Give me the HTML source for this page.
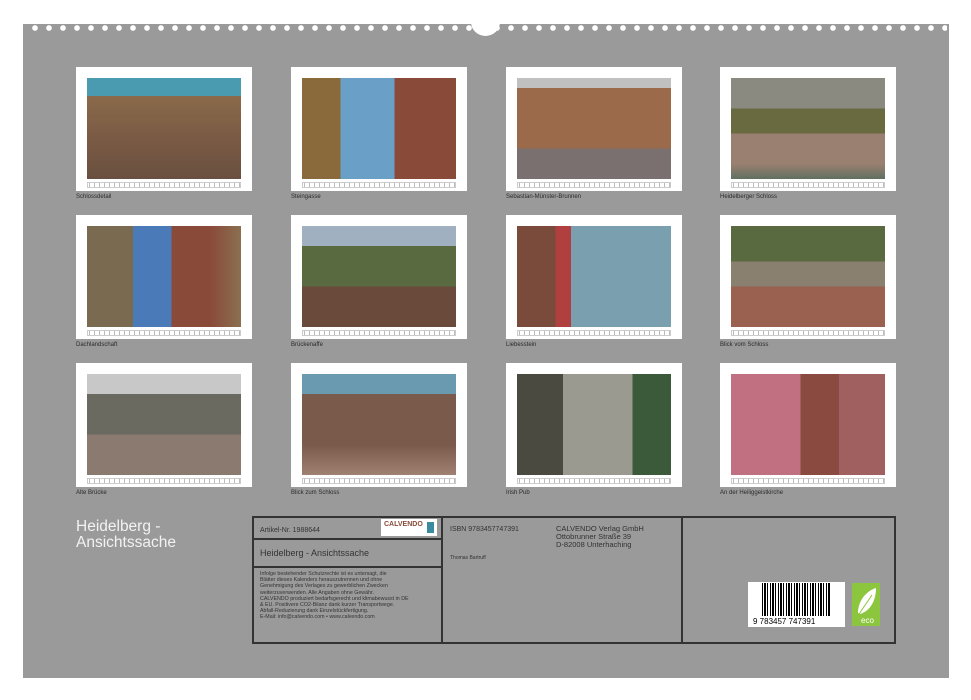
<!DOCTYPE html><html><head><meta charset="utf-8"><style>
body{margin:0;width:971px;height:700px;background:#fff;position:relative;overflow:hidden;font-family:"Liberation Sans",sans-serif}
.pan{position:absolute;left:23px;top:24px;width:926px;height:654px;background:#9a9a9a}
.dots{position:absolute;left:32px;top:25px;width:915px;height:6px;background:radial-gradient(circle at 3px 3px,#fff 2.6px,transparent 3px) 0 0/14px 6px repeat-x}
.notch{position:absolute;left:471px;top:8px;width:29px;height:28px;border-radius:50%;background:#fff}
.c{position:absolute;width:176px;height:124px;background:#fff}
.c .p{position:absolute;left:11px;top:11px;width:154px;height:101px}
.c .s{position:absolute;left:11px;top:115px;width:154px;height:6px;background:repeating-linear-gradient(90deg,#fff 0 1px,#bbb 1px 2px,#fff 2px 5px);border:1px solid #ccc;box-sizing:border-box}
.cap{position:absolute;font-size:6px;color:#2a2a2a}
.b{position:absolute;border:2px solid #333;box-sizing:border-box}
.t{position:absolute;color:#333}
</style></head><body>
<div class="pan"></div><div class="dots"></div><div class="notch"></div>

<div class="c" style="left:76px;top:67px"><div class="p" style="background:linear-gradient(180deg,#4a9ab0 0 18%,#8a6a4a 18%,#7a5a44 60%,#6a5040)"></div><div class="s"></div></div>
<div class="c" style="left:291px;top:67px"><div class="p" style="background:linear-gradient(90deg,#8a6a3a 0 25%,#6aa0c8 25% 60%,#8a4a3a 60%)"></div><div class="s"></div></div>
<div class="c" style="left:506px;top:67px"><div class="p" style="background:linear-gradient(180deg,#c0c0c0 0 10%,#9a6a4a 10% 70%,#7a7070 70%)"></div><div class="s"></div></div>
<div class="c" style="left:720px;top:67px"><div class="p" style="background:linear-gradient(180deg,#8a8a80 0 30%,#6a6a40 30% 55%,#9a8070 55% 85%,#607060)"></div><div class="s"></div></div>

<div class="c" style="left:76px;top:215px"><div class="p" style="background:linear-gradient(90deg,#7a6a50 0 30%,#4a7ab8 30% 55%,#8a4a3a 55% 80%,#8a7050)"></div><div class="s"></div></div>
<div class="c" style="left:291px;top:215px"><div class="p" style="background:linear-gradient(180deg,#a0b0c0 0 20%,#5a6a40 20% 60%,#6a4a3a 60%)"></div><div class="s"></div></div>
<div class="c" style="left:506px;top:215px"><div class="p" style="background:linear-gradient(90deg,#7a4a3a 0 25%,#b04040 25% 35%,#7aa0b0 35% 100%)"></div><div class="s"></div></div>
<div class="c" style="left:720px;top:215px"><div class="p" style="background:linear-gradient(180deg,#5a6a40 0 35%,#8a8070 35% 60%,#9a6050 60%)"></div><div class="s"></div></div>

<div class="c" style="left:76px;top:363px"><div class="p" style="background:linear-gradient(180deg,#c8c8c8 0 20%,#6a6a60 20% 60%,#8a7a70 60%)"></div><div class="s"></div></div>
<div class="c" style="left:291px;top:363px"><div class="p" style="background:linear-gradient(180deg,#6a9ab0 0 20%,#7a5a4a 20% 70%,#a08070)"></div><div class="s"></div></div>
<div class="c" style="left:506px;top:363px"><div class="p" style="background:linear-gradient(90deg,#4a4a40 0 30%,#9a9a90 30% 75%,#3a5a3a 75%)"></div><div class="s"></div></div>
<div class="c" style="left:720px;top:363px"><div class="p" style="background:linear-gradient(90deg,#c07080 0 45%,#8a4a40 45% 70%,#a06060 70%)"></div><div class="s"></div></div>

<div class="cap" style="left:76px;top:194px">Schlossdetail</div>
<div class="cap" style="left:291px;top:194px">Steingasse</div>
<div class="cap" style="left:506px;top:194px">Sebastian-Münster-Brunnen</div>
<div class="cap" style="left:720px;top:194px">Heidelberger Schloss</div>
<div class="cap" style="left:76px;top:342px">Dachlandschaft</div>
<div class="cap" style="left:291px;top:342px">Brückenaffe</div>
<div class="cap" style="left:506px;top:342px">Liebesstein</div>
<div class="cap" style="left:720px;top:342px">Blick vom Schloss</div>
<div class="cap" style="left:76px;top:490px">Alte Brücke</div>
<div class="cap" style="left:291px;top:490px">Blick zum Schloss</div>
<div class="cap" style="left:506px;top:490px">Irish Pub</div>
<div class="cap" style="left:720px;top:490px">An der Heiliggeistkirche</div>

<div class="t" style="left:76px;top:519px;font-size:15.5px;line-height:16px;color:#f2f2f2">Heidelberg -<br>Ansichtssache</div>

<div class="b" style="left:252px;top:516px;width:644px;height:128px"></div>
<div class="b" style="left:441px;top:516px;width:242px;height:128px"></div>
<div class="b" style="left:252px;top:538px;width:191px;height:30px"></div>
<div class="t" style="left:260px;top:527px;font-size:7px">Artikel-Nr. 1988644</div>
<div style="position:absolute;left:381px;top:519px;width:56px;height:17px;background:#fff"><div style="font-size:7px;color:#8a4a3a;margin:2px 0 0 3px;font-weight:bold">CALVENDO</div><div style="position:absolute;right:3px;top:3px;width:7px;height:11px;background:#3a8aa0"></div></div>
<div class="t" style="left:260px;top:548px;font-size:9px">Heidelberg - Ansichtssache</div>
<div class="t" style="left:260px;top:571px;font-size:5.3px;line-height:6.2px">Infolge bestehender Schutzrechte ist es untersagt, die<br>Blätter dieses Kalenders herauszutrennen und ohne<br>Genehmigung des Verlages zu gewerblichen Zwecken<br>weiterzuverwenden. Alle Angaben ohne Gewähr.<br>CALVENDO produziert bedarfsgerecht und klimabewusst in DE<br>&amp; EU. Positivere CO2-Bilanz dank kurzer Transportwege.<br>Abfall-Reduzierung dank Einzelstückfertigung.<br>E-Mail: info@calvendo.com • www.calvendo.com</div>
<div class="t" style="left:450px;top:526px;font-size:7px">ISBN 9783457747391</div>
<div class="t" style="left:450px;top:555px;font-size:5px">Thomas Bartruff</div>
<div class="t" style="left:556px;top:525px;font-size:7.5px;line-height:8px">CALVENDO Verlag GmbH<br>Ottobrunner Straße 39<br>D-82008 Unterhaching</div>

<div style="position:absolute;left:748px;top:582px;width:97px;height:45px;background:#fff">
<div style="position:absolute;left:14px;top:1px;width:68px;height:33px;background:repeating-linear-gradient(90deg,#000 0 1px,#fff 1px 2px,#000 2px 4px,#fff 4px 5px,#000 5px 6px,#fff 6px 8px)"></div>
<div style="position:absolute;left:5px;top:35px;font-size:8px;line-height:9px;color:#000">9&nbsp;783457&nbsp;747391</div></div>
<div style="position:absolute;left:852px;top:583px;width:28px;height:43px;background:#8cc63f">
<svg width="28" height="43"><path d="M6 30 C6 18 14 8 24 5 C24 18 18 28 8 31 Z" fill="#fff"/><path d="M5 34 L20 12" stroke="#8cc63f" stroke-width="1"/><text x="9" y="40" font-size="8" fill="#fff" font-family="Liberation Sans">eco</text></svg></div>
</body></html>
